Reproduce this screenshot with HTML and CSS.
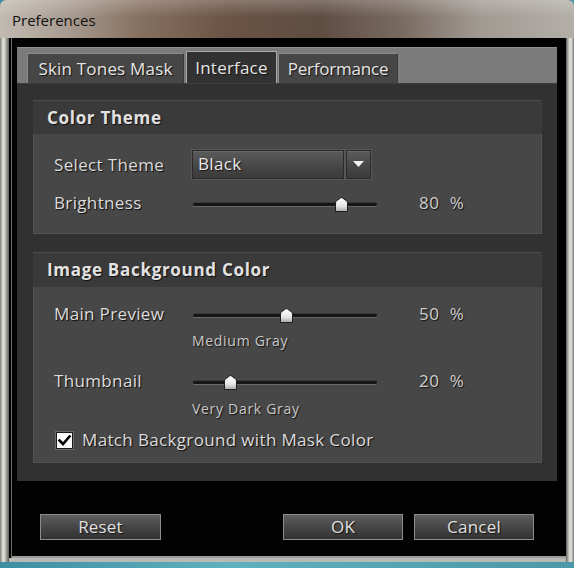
FILE: index.html
```html
<!DOCTYPE html>
<html>
<head>
<meta charset="utf-8">
<title>Preferences</title>
<link rel="stylesheet" href="styles.css">
</head>
<body>
<div class="frame">
  <div class="titlebar"><span class="title">Preferences</span></div>
  <div class="chrome">
    <div class="client">
      <div class="tabs">
        <div class="tabstrip">
          <div class="tab tab-skin">Skin Tones Mask</div>
          <div class="tab tab-interface active">Interface</div>
          <div class="tab tab-perf">Performance</div>
        </div>
        <div class="panel">
          <section class="group group-theme">
            <h2 class="group-head">Color Theme</h2>
            <div class="group-body">
              <div class="row row-combo">
                <span class="label">Select Theme</span>
                <div class="combo">
                  <div class="combo-field">Black</div>
                  <div class="combo-btn">
                    <svg width="11" height="6" viewBox="0 0 11 6"><path d="M0 0 H11 L5.5 6 Z" fill="#f2f2f2"/></svg>
                  </div>
                </div>
              </div>
              <div class="row row-slider row-bright">
                <span class="label">Brightness</span>
                <div class="slider">
                  <div class="track"></div>
                  <svg class="thumb" style="left:80%" width="13" height="15" viewBox="0 0 13 15"><defs><linearGradient id="tg1" x1="0" y1="0" x2="0" y2="1"><stop offset="0" stop-color="#ffffff"/><stop offset="0.6" stop-color="#e6e6e6"/><stop offset="1" stop-color="#a8a8a8"/></linearGradient></defs><path d="M0.5 14.5 V6 Q0.5 4.5 2 3.5 L5.5 1 Q6.5 0.3 7.5 1 L11 3.5 Q12.5 4.5 12.5 6 V14.5 Z" fill="url(#tg1)" stroke="#1e1e1e"/></svg>
                </div>
                <span class="value"><span class="num">80</span><span class="pct">%</span></span>
              </div>
            </div>
          </section>
          <section class="group group-bg">
            <h2 class="group-head">Image Background Color</h2>
            <div class="group-body">
              <div class="row row-slider row-main">
                <span class="label">Main Preview</span>
                <div class="slider">
                  <div class="track"></div>
                  <svg class="thumb" style="left:50%" width="13" height="15" viewBox="0 0 13 15"><defs><linearGradient id="tg2" x1="0" y1="0" x2="0" y2="1"><stop offset="0" stop-color="#ffffff"/><stop offset="0.6" stop-color="#e6e6e6"/><stop offset="1" stop-color="#a8a8a8"/></linearGradient></defs><path d="M0.5 14.5 V6 Q0.5 4.5 2 3.5 L5.5 1 Q6.5 0.3 7.5 1 L11 3.5 Q12.5 4.5 12.5 6 V14.5 Z" fill="url(#tg2)" stroke="#1e1e1e"/></svg>
                </div>
                <span class="value"><span class="num">50</span><span class="pct">%</span></span>
              </div>
              <div class="sublabel sub-main">Medium Gray</div>
              <div class="row row-slider row-thumb">
                <span class="label">Thumbnail</span>
                <div class="slider">
                  <div class="track"></div>
                  <svg class="thumb" style="left:20%" width="13" height="15" viewBox="0 0 13 15"><defs><linearGradient id="tg3" x1="0" y1="0" x2="0" y2="1"><stop offset="0" stop-color="#ffffff"/><stop offset="0.6" stop-color="#e6e6e6"/><stop offset="1" stop-color="#a8a8a8"/></linearGradient></defs><path d="M0.5 14.5 V6 Q0.5 4.5 2 3.5 L5.5 1 Q6.5 0.3 7.5 1 L11 3.5 Q12.5 4.5 12.5 6 V14.5 Z" fill="url(#tg3)" stroke="#1e1e1e"/></svg>
                </div>
                <span class="value"><span class="num">20</span><span class="pct">%</span></span>
              </div>
              <div class="sublabel sub-thumb">Very Dark Gray</div>
              <label class="check-row">
                <span class="checkbox">
                  <svg width="15" height="15" viewBox="0 0 15 15"><path d="M2.5 7.5 L6 11 L12.5 3.5" fill="none" stroke="#000" stroke-width="2.6" stroke-linecap="square"/></svg>
                </span>
                <span class="check-label">Match Background with Mask Color</span>
              </label>
            </div>
          </section>
        </div>
      </div>
      <div class="buttons">
        <div class="btn btn-reset">Reset</div>
        <div class="btn btn-ok">OK</div>
        <div class="btn btn-cancel">Cancel</div>
      </div>
    </div>
  </div>
</div>
</body>
</html>
```
FILE: styles.css
```css
html, body {
  margin: 0;
  padding: 0;
}
body {
  width: 574px;
  height: 568px;
  overflow: hidden;
  background: linear-gradient(to right, #3f8fa3, #5fb0c0 40%, #4a98aa);
  font-family: "Open Sans", "DejaVu Sans", sans-serif;
}
.frame {
  width: 574px;
  height: 562px;
  display: flex;
  flex-direction: column;
  border-radius: 6px 6px 0 0;
  overflow: hidden;
  box-shadow: inset 0 0 0 1px #4a4a48;
}
.titlebar {
  height: 38px;
  flex: none;
  display: flex;
  align-items: center;
  padding-left: 12px;
  background:
    linear-gradient(to bottom, rgba(255,255,255,0.22), rgba(255,255,255,0) 45%),
    linear-gradient(to right, #c2bbb2 0, #ab9f95 60px, #86705f 140px, #6a5344 230px, #5f4d42 320px, #786a60 400px, #a19a93 480px, #b3aea8 574px);
  box-sizing: border-box;
}
.title {
  font-size: 15px;
  color: #111;
  margin-top: 2px;
}
.chrome {
  flex: 1;
  display: flex;
  padding: 0 8px 4px 9px;
  background:
    linear-gradient(to right, #6f736c 0, #c9cdc4 2px, #e2e4dc 4px, #a6aaa2 6px, #5e605b 9px, transparent 9px),
    linear-gradient(to left, #6f736c 0, #c9cdc4 2px, #e2e4dc 4px, #a6aaa2 6px, #5e605b 8px, transparent 8px),
    #b8bbb4;
}
.client {
  flex: 1;
  display: flex;
  flex-direction: column;
  background: #020202;
  padding: 9px 9px 0 8px;
  box-shadow: inset 2px 0 0 #000, inset 3px 0 0 #6a6a6a, inset 0 -2px 0 #9a9a9a;
}
.tabs {
  display: flex;
  flex-direction: column;
}
.tabstrip {
  height: 36px;
  display: flex;
  align-items: flex-end;
  gap: 1px;
  padding-left: 10px;
  background: #7b7b7b;
  box-shadow: inset 0 1px 0 #8e8e8e;
}
.tab {
  height: 30px;
  box-sizing: border-box;
  padding-top: 3px;
  text-align: center;
  white-space: nowrap;
  font-size: 17px;
  letter-spacing: 0.2px;
  color: #e6e6e6;
  text-shadow: 1px 1px 1px #111;
  background: #464646;
  border-top: 1px solid #8a8a8a;
  border-left: 1px solid #8a8a8a;
  border-right: 1px solid #3a3a3a;
}
.tab-skin { width: 157px; }
.tab-interface { width: 91px; margin-left: 1px; }
.tab-perf { width: 120px; letter-spacing: -0.2px; }
.tab.active {
  height: 32px;
  padding-top: 4px;
  background: #323232;
  border-top: 1px solid #a8a8a8;
  border-left: 1px solid #a8a8a8;
  border-right: 1px solid #a8a8a8;
}
.panel {
  height: 398px;
  box-sizing: border-box;
  background: #313131;
  padding: 17px 15px 0 16px;
  display: flex;
  flex-direction: column;
  gap: 18px;
  box-shadow: inset 0 1px 0 #3c3c3c;
}
.group {
  background: #474747;
  box-shadow: inset 0 0 0 1px #525252;
  display: flex;
  flex-direction: column;
}
.group-theme { height: 134px; }
.group-bg { height: 211px; }
.group-head {
  margin: 0;
  height: 34px;
  flex: none;
  box-sizing: border-box;
  padding: 5px 0 0 14px;
  background: #3a3a3a;
  border-top: 1px solid #4c4c4c;
  font-size: 17px;
  font-weight: 700;
  letter-spacing: 0.7px;
  color: #e2e2e2;
  text-shadow: 1px 1px 1px #111;
}
.group-bg .group-head { height: 35px; }
.group-body {
  display: flex;
  flex-direction: column;
  padding-left: 21px;
}
.group-theme .group-body { padding-top: 16px; }
.group-bg .group-body { padding-top: 18px; }
.row {
  display: grid;
  grid-template-columns: 138px 185px 1fr;
  align-items: center;
}
.label, .check-label {
  font-size: 17px;
  letter-spacing: 0.35px;
  color: #dcdcdc;
  text-shadow: 1px 1px 1px #0c0c0c;
}
.row-slider .label, .row-slider .value {
  align-self: start;
  line-height: 17px;
}
.row-combo { height: 29px; }
.row-slider { height: 20px; }
.row-bright { margin-top: 15px; }
.row-thumb { margin-top: 22px; }
.combo {
  display: flex;
  gap: 2px;
  height: 29px;
}
.combo-field, .combo-btn {
  box-sizing: border-box;
  height: 29px;
  background: linear-gradient(to bottom, #5c5c5c, #474747 55%, #3b3b3b);
  border: 1px solid #2a2a2a;
  box-shadow: 0 0 0 1px #575757, inset 0 1px 0 #686868;
}
.combo-field {
  width: 152px;
  padding: 1px 0 0 5px;
  font-size: 17px;
  letter-spacing: 0.35px;
  color: #e8e8e8;
  text-shadow: 1px 1px 1px #111;
}
.combo-btn {
  width: 25px;
  display: flex;
  align-items: center;
  justify-content: center;
}
.combo-btn svg { margin-top: -2px; }
.slider {
  position: relative;
  height: 20px;
}
.track {
  position: absolute;
  left: 1px;
  right: 0;
  top: 9px;
  height: 3px;
  border-radius: 2px;
  background: #161616;
  box-shadow: 0 1px 0 #6a6a6a, 0 -1px 0 #3a3a3a;
}
.thumb {
  position: absolute;
  top: 3px;
  margin-left: -5px;
}
.value {
  padding-left: 42px;
  font-size: 17px;
  color: #cfcfcf;
  letter-spacing: 0.6px;
  text-shadow: 1px 1px 1px #111;
}
.pct { margin-left: 10px; }
.sublabel {
  margin-left: 138px;
  height: 18px;
  line-height: 18px;
  font-size: 14px;
  letter-spacing: 0.7px;
  color: #cacaca;
  text-shadow: 1px 1px 1px #111;
}
.sub-main { margin-top: 7px; }
.sub-thumb { margin-top: 8px; }
.check-row {
  display: flex;
  align-items: center;
  height: 20px;
  margin-top: 12px;
  padding-left: 2px;
}
.checkbox {
  width: 17px;
  height: 17px;
  box-sizing: border-box;
  background: #fbfbfb;
  border: 1px solid #1a1a1a;
  box-shadow: 0 0 0 1px #6a6a6a;
  display: flex;
  align-items: center;
  justify-content: center;
  margin-right: 9px;
}
.check-label { margin-bottom: 2px; }
.buttons {
  display: flex;
  margin-top: 33px;
  padding: 0 23px;
}
.btn {
  height: 26px;
  box-sizing: border-box;
  width: 120px;
  display: flex;
  align-items: center;
  justify-content: center;
  padding-bottom: 2px;
  font-size: 17px;
  letter-spacing: 0.2px;
  color: #e0e0e0;
  text-shadow: 1px 1px 1px #111;
  background: linear-gradient(to bottom, #5e5e5e, #464646 50%, #323232);
  border: 1px solid #8c8c8c;
}
.btn-reset { width: 121px; }
.btn-ok { margin-left: auto; }
.btn-cancel { margin-left: 11px; }
```
